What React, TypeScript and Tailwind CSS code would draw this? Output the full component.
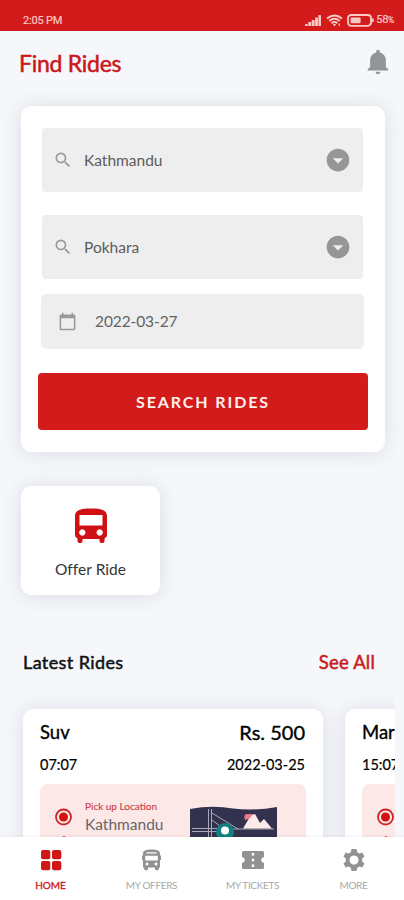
import React from "react";
import { IoMdNotifications, IoMdArrowDropdownCircle } from "react-icons/io";
import { MdSearch, MdCalendarToday } from "react-icons/md";

const SHADOW = "shadow-[0_1px_20px_rgba(40,50,55,0.13)]";

function StatusBar() {
  return (
    <div className="flex h-[31px] shrink-0 items-end justify-between bg-[#d31b1b] pr-[10px] pb-[4px] pl-[23px] text-[#fbc9c5]">
      <span className="font-['Roboto',sans-serif] text-[11px] leading-[13px] tracking-[-0.2px] [-webkit-text-stroke:0.2px_#fbc9c5]">2:05 PM</span>
      <div className="flex items-center">
        <svg width="17" height="13" viewBox="0 0 17 13" fill="currentColor">
          <rect x="0" y="10" width="2.8" height="2" rx=".6" />
          <rect x="3.3" y="8" width="2.9" height="4" rx=".6" />
          <rect x="6.7" y="6" width="2.9" height="6" rx=".6" />
          <rect x="10.1" y="3.5" width="2.8" height="8.5" rx=".6" />
          <rect x="13.4" y="1" width="2.6" height="11" rx=".6" />
        </svg>
        <svg className="ml-[4px]" width="17" height="13" viewBox="0 0 17 13" fill="none" stroke="currentColor" strokeWidth="1.9">
          <path d="M1 4.5Q8.5-1.5 16 4.5" />
          <path d="M3.3 7Q8.5 2.7 13.7 7" />
          <path d="M5.6 9.2Q8.5 6.8 11.4 9.2" />
          <path d="M6.8 10L8.5 12.4L10.2 10Z" fill="currentColor" stroke="none" />
          <path d="M13.2 9.5v2.5" strokeWidth="1.2" />
        </svg>
        <svg className="ml-[4px]" width="27" height="13" viewBox="0 0 27 13">
          <rect x="1" y="1" width="23" height="10.8" rx="3.2" fill="none" stroke="currentColor" strokeWidth="1.8" />
          <rect x="3.6" y="3.6" width="10" height="5.6" rx="1" fill="currentColor" />
          <rect x="24.7" y="4.3" width="2" height="4" rx="1" fill="currentColor" />
        </svg>
        <span className="ml-[2px] font-['Roboto',sans-serif] text-[11px] leading-[13px] tracking-[-0.3px] [-webkit-text-stroke:0.2px_#fbc9c5]">
          58<span className="text-[8.5px]">%</span>
        </span>
      </div>
    </div>
  );
}

function CityField({ city }: { city: string }) {
  return (
    <div className="flex h-16 items-center rounded bg-[#eeeeee] pr-[11px] pl-[11px]">
      <MdSearch className="size-[20px] text-[#9a9a9a]" />
      <span className="ml-[11px] flex-1 pt-[2px] text-[15.5px] text-[#5c5c5c]">{city}</span>
      <IoMdArrowDropdownCircle className="size-7 text-[#969696]" />
    </div>
  );
}

function BusIcon() {
  return (
    <svg className="shrink-0" width="32" height="36" viewBox="0 0 32 36">
      <path
        fill="#cf1115"
        fillRule="evenodd"
        d="M0 8C0 2 6 .5 16 .5S32 2 32 8V27Q32 29.500 29.500 30.500V33Q29.500 35 27.500 35H26.500Q24.500 35 24.500 33V31H7.500V33Q7.500 35 5.500 35H4.500Q2.500 35 2.500 33V30.500Q0 29.500 0 27ZM4.500 7V17.500H27.500V7ZM7.300 21.300a3.200 3.200 0 1 0 .01 0ZM24.700 21.300a3.200 3.200 0 1 0 .01 0Z"
      />
    </svg>
  );
}

function SmallBusIcon() {
  return (
    <svg width="19" height="22" viewBox="0 0 19 22">
      <path
        fill="currentColor"
        fillRule="evenodd"
        d="M1 4.500C1 1.500 4 .5 9.500 .5S18 1.500 18 4.500V6.500H19V11H18V18.500H16.800V20Q16.800 21.300 15.500 21.300H14.300Q13 21.300 13 20V18.500H6V20Q6 21.300 4.700 21.300H3.500Q2.200 21.300 2.200 20V18.500H1V11H0V6.500H1ZM4.500 3.300V4.500H14.500V3.300ZM3.200 6.800V11.500H15.800V6.800ZM5 13.500a1.500 1.500 0 1 0 .01 0ZM14 13.500a1.500 1.500 0 1 0 .01 0Z"
      />
    </svg>
  );
}

function TicketIcon() {
  return (
    <svg width="24" height="20" viewBox="0 0 24 20">
      <path
        fill="currentColor"
        fillRule="evenodd"
        d="M2.500 1H21.500Q23 1 23 2.500V7.300A2.700 2.700 0 0 0 23 12.700V17.500Q23 19 21.500 19H2.500Q1 19 1 17.500V12.700A2.700 2.700 0 0 0 1 7.300V2.500Q1 1 2.500 1ZM10.800 3V5.400H13.200V3ZM10.800 8.800V11.200H13.200V8.800ZM10.800 14.600V17H13.200V14.600Z"
      />
    </svg>
  );
}

function TargetDot() {
  return (
    <svg width="18" height="36" viewBox="0 0 18 36">
      <circle cx="8.500" cy="9" r="7.500" fill="none" stroke="#cf2326" strokeWidth="1.800" />
      <circle cx="8.500" cy="9" r="4.500" fill="#d31313" />
      <path d="M9 28.200v8" stroke="#d33" strokeWidth="2.500" strokeDasharray="4 3" />
    </svg>
  );
}

function MapArt() {
  return (
    <svg width="88" height="60" viewBox="0 0 88 60">
      <path d="M0 3Q22-1 43 2.500Q65 5 87 1V60H0Z" fill="#33324e" />
      <g stroke="#a9a8bb" strokeWidth="1" fill="none">
        <path d="M2 22.500H30M2 25.500H28M43 23H84" />
        <path d="M18.500 3V60M21.500 3V60M22 7L48 23M22 14L34 23" />
      </g>
      <path d="M53 22.500L61 9L65 8L70 17L74 13L82 22.500Z" fill="#fde9e9" />
      <path d="M55 14Q53 8 57 8H63L59 13Z" fill="#ed7585" />
      <circle cx="35" cy="26" r="9" fill="#128080" />
      <circle cx="35" cy="24.500" r="4" fill="#fff" />
    </svg>
  );
}

type Ride = { name: string; time: string; price?: string; date?: string; pickup?: string };

const rides: Ride[] = [
  { name: "Suv", time: "07:07", price: "Rs. 500", date: "2022-03-25", pickup: "Kathmandu" },
  { name: "Mar", time: "15:07" },
];

function RideCard({ ride }: { ride: Ride }) {
  return (
    <div className={`h-[240px] w-[300px] shrink-0 rounded-[10px] bg-white pr-[18px] pl-[17px] pt-[11px] ${SHADOW}`}>
      <div className="flex justify-between leading-6 text-black [-webkit-text-stroke:0.35px_black]">
        <span className="text-[18.5px]">{ride.name}</span>
        {ride.price && <span className="text-[20px]">{ride.price}</span>}
      </div>
      <div className="mt-[11px] flex justify-between text-[14.5px] leading-5 text-black [-webkit-text-stroke:0.2px_black]">
        <span>{ride.time}</span>
        {ride.date && <span>{ride.date}</span>}
      </div>
      <div className="mt-[9px] flex h-40 w-[266px] rounded-lg bg-[#fce8e7] pl-[15px]">
        <div className="pt-[24px]"><TargetDot /></div>
        {ride.pickup && (
          <>
            <div className="ml-[12px] w-[105px] pt-[16px]">
              <div className="text-[10px] leading-[13px] text-[#cf4348] [-webkit-text-stroke:0.15px_#cf4348]">Pick up Location</div>
              <div className="mt-px text-[15.5px] leading-5 text-[#666]">{ride.pickup}</div>
            </div>
            <div className="pt-[22px]"><MapArt /></div>
          </>
        )}
      </div>
    </div>
  );
}

function NavItem({ icon, label, active }: { icon: React.ReactNode; label: string; active?: boolean }) {
  return (
    <div className={`flex flex-1 flex-col items-center pt-[10px] ${active ? "text-[#d01717]" : "text-[#929292]"}`}>
      <div className="flex h-[26px] items-center">{icon}</div>
      <span className={`mt-[5px] text-[10px] leading-[14px] ${active ? "[-webkit-text-stroke:0.3px_#d01717]" : "tracking-[-0.35px] text-[#a8a8a8]"}`}>
        {label}
      </span>
    </div>
  );
}

export default function App() {
  return (
    <div className="flex h-[900px] w-[404px] flex-col overflow-hidden bg-[#f5f7fb] font-['Lato',sans-serif]">
      <StatusBar />
      <header className="flex h-[75px] shrink-0 items-start justify-between pr-[11px] pl-[19px]">
        <h1 className="mt-[17px] text-[23px] leading-[30px] tracking-[-0.25px] text-[#cc1719] [-webkit-text-stroke:0.5px_#cc1719]">Find Rides</h1>
        <IoMdNotifications className="mt-[16px] size-[30px] text-[#929595]" />
      </header>

      <section className={`mr-[19px] ml-[21px] h-[346px] shrink-0 rounded-[11px] bg-white pr-[22px] pl-[21px] pt-[22px] ${SHADOW}`}>
        <CityField city="Kathmandu" />
        <div className="mt-[23px]"><CityField city="Pokhara" /></div>
        <div className="-mx-px mt-[15px] flex h-[55px] items-center rounded-[5px] bg-[#eeeeee] pl-[17px]">
          <MdCalendarToday className="size-[19px] text-[#999]" />
          <span className="ml-[18px] text-[15.5px] tracking-[-0.1px] text-[#636363]">2022-03-27</span>
        </div>
        <button className="-mx-1 mt-[24px] flex h-[57px] w-[330px] items-center justify-center rounded-[4px] bg-[#d31b1b] text-[16px] font-bold tracking-[1.9px] text-[#fff0ee]">
          SEARCH RIDES
        </button>
      </section>

      <section className={`mt-[34px] ml-[21px] flex h-[109px] w-[139px] shrink-0 flex-col items-center rounded-[10px] bg-white pt-[22px] ${SHADOW}`}>
        <BusIcon />
        <span className="mt-[15px] text-[15.5px] leading-5 tracking-[0.05px] text-[#333]">Offer Ride</span>
      </section>

      <div className="mt-[55px] flex shrink-0 items-center justify-between pr-[29px] pl-[23px] leading-6">
        <h2 className="text-[18px] tracking-[0.4px] text-[#111] [-webkit-text-stroke:0.5px_#111]">Latest Rides</h2>
        <span className="text-[18.5px] tracking-[0.2px] text-[#c91b20] [-webkit-text-stroke:0.5px_#c91b20]">See All</span>
      </div>

      <section className="mr-[9px] flex h-[163px] shrink-0 gap-[22px] overflow-hidden pt-[35px] pl-[23px]">
        {rides.map((ride) => (
          <RideCard key={ride.name} ride={ride} />
        ))}
      </section>

      <nav className="relative flex h-[63px] shrink-0 bg-white shadow-[0_-1px_3px_rgba(0,0,0,0.05)]">
        <NavItem
          active
          label="HOME"
          icon={
            <svg width="22" height="22" viewBox="0 0 22 22" fill="currentColor">
              <rect x="1" y="1" width="9.300" height="9.300" rx="2" />
              <rect x="12" y="1" width="9.300" height="9.300" rx="2" />
              <rect x="1" y="12" width="9.300" height="9.300" rx="2" />
              <rect x="12" y="12" width="9.300" height="9.300" rx="2" />
            </svg>
          }
        />
        <NavItem label="MY OFFERS" icon={<SmallBusIcon />} />
        <NavItem label="MY TICKETS" icon={<TicketIcon />} />
        <NavItem
          label="MORE"
          icon={
            <svg width="22" height="24" viewBox="0 0 22 24" fill="currentColor">
              <path
                fillRule="evenodd"
                d="M8.500 1H13.500L14.200 4.200L16.400 5.500L19.300 4.400L21.500 8.400L19.200 10.600V13.400L21.500 15.600L19.300 19.600L16.400 18.500L14.200 19.800L13.500 23H8.500L7.800 19.800L5.600 18.500L2.700 19.600L.5 15.600L2.800 13.400V10.600L.5 8.400L2.700 4.400L5.600 5.500L7.800 4.200ZM11 7.500a4.500 4.500 0 1 0 .01 0Z"
              />
            </svg>
          }
        />
      </nav>
    </div>
  );
}
